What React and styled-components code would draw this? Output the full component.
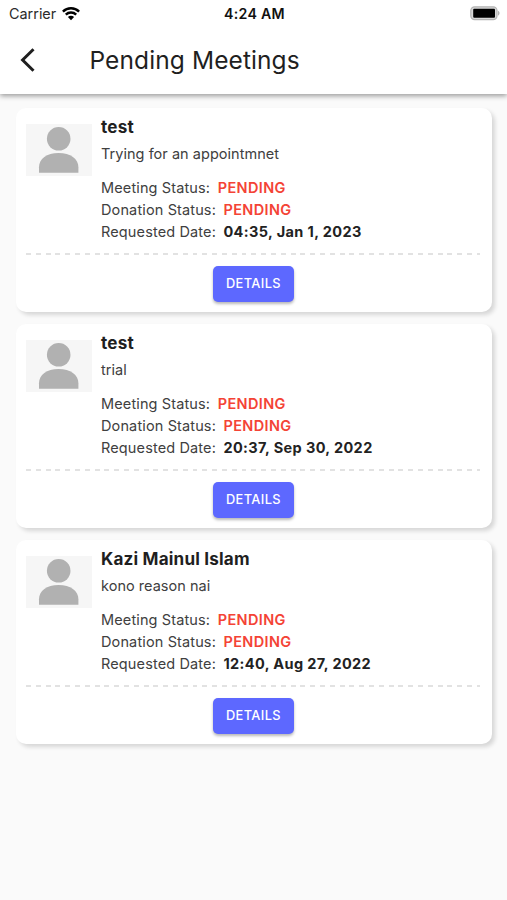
import React from 'react';
import styled, { createGlobalStyle } from 'styled-components';

const GlobalStyle = createGlobalStyle`
   * {
      box-sizing: border-box;
   }
   body {
      margin: 0;
      background: #fafafa;
      font-family: Inter, 'Liberation Sans', sans-serif;
      color: #1f1f1f;
   }
`

const Screen = styled.div`
   width: 507px;
   height: 900px;
   overflow: hidden;
   background: #fafafa;
`

const Header = styled.header`
   height: 94px;
   background: #fff;
   box-shadow: 0 2px 5px rgba(0, 0, 0, 0.38);
`

const StatusBar = styled.div`
   display: grid;
   grid-template-columns: 1fr auto 1fr;
   align-items: center;
   height: 27px;
   padding: 0 7px 0 9px;
`

const Carrier = styled.div`
   display: flex;
   align-items: center;
   gap: 6px;
   font-size: 14.4px;
   letter-spacing: 0;
   color: #2b2b2b;
`

const Clock = styled.div`
   font-size: 14.2px;
   font-weight: 600;
   letter-spacing: 0.25px;
   color: #111;
`

const BatteryIcon = styled.svg`
   justify-self: end;
`

const NavBar = styled.div`
   display: flex;
   align-items: center;
   height: 65px;
   padding-left: 20px;
`

const BackButton = styled.button`
   display: flex;
   width: 69.5px;
   padding: 0;
   border: none;
   background: none;
`

const Title = styled.h1`
   margin: 0;
   font-size: 24.5px;
   line-height: 30px;
   font-weight: 400;
   letter-spacing: 0.1px;
`

const List = styled.main`
   display: flex;
   flex-direction: column;
   gap: 12.7px;
   padding: 14px 15px 0 16px;
`

const Card = styled.article`
   height: 203.5px;
   padding: 8px 12px 0 9.5px;
   border-radius: 10px;
   background: #fff;
   box-shadow: 3px 3px 4px rgba(0, 0, 0, 0.14);
`

const CardTop = styled.div`
   display: flex;
   height: 136.5px;
`

const Avatar = styled.svg`
   flex: none;
   margin: 8px 9.5px 0 0;
   background: #f6f6f6;
`

const Name = styled.h2`
   margin: 0;
   font-size: 17.1px;
   line-height: 22px;
   font-weight: 700;
   letter-spacing: 0.18px;
`

const Reason = styled.p`
   margin: 5px 0 12px;
   font-size: 14.5px;
   line-height: 22px;
   letter-spacing: 0.03px;
   color: #404040;
`

const Field = styled.div`
   display: flex;
   gap: 7.5px;
   font-size: 14.5px;
   line-height: 22px;
   letter-spacing: 0.13px;
   color: #404040;
`

const Value = styled.span`
   font-weight: ${props => props.$pending ? 600 : 700};
   letter-spacing: 0.38px;
   color: ${props => props.$pending ? '#f44336' : '#222'};
`

const Divider = styled.div`
   height: 2px;
   background: repeating-linear-gradient(to right, #e2e2e2 0 4.9px, transparent 4.9px 9.8px);
`

const DetailsButton = styled.button`
   display: block;
   width: 81px;
   height: 36px;
   margin: 11.5px 0 0 187.5px;
   padding: 0 0 1px;
   border: none;
   border-radius: 5px;
   background: #5d68ff;
   box-shadow: 0 2px 3px rgba(0, 0, 0, 0.28);
   color: #fff;
   font-family: inherit;
   font-size: 12.8px;
   font-weight: 500;
   letter-spacing: 0.4px;
`

const meetings = [
   { id: 1, name: 'test', reason: 'Trying for an appointmnet', date: '04:35, Jan 1, 2023' },
   { id: 2, name: 'test', reason: 'trial', date: '20:37, Sep 30, 2022' },
   { id: 3, name: 'Kazi Mainul Islam', reason: 'kono reason nai', date: '12:40, Aug 27, 2022' },
];

const WifiIcon = () => (
   <svg width="18" height="14" viewBox="0 0 18 14" fill="none" stroke="#000" strokeWidth="2.4">
      <path d="M0.9 4.6a11.5 11.5 0 0 1 16.2 0" />
      <path d="M3.8 7.6a7.4 7.4 0 0 1 10.4 0" />
      <path d="M9 13.2 5.9 10a4.4 4.4 0 0 1 6.2 0Z" fill="#000" stroke="none" />
   </svg>
)

const Battery = () => (
   <BatteryIcon width="30" height="15" viewBox="0 0 30 15">
      <rect x="0.8" y="0.8" width="26.2" height="12.8" rx="3.8" fill="#d8d8d8" stroke="#b4b4b4" strokeWidth="1.2" />
      <rect x="3.2" y="2.8" width="21.8" height="9" rx="1" fill="#000" />
      <path d="M28 4.8c2 .8 2 4 0 4.8Z" fill="#b4b4b4" />
   </BatteryIcon>
)

const MeetingCard = ({ meeting }) => (
   <Card>
      <CardTop>
         <Avatar width="66" height="52" viewBox="0 0 66 52" fill="#b1b1b1">
            <circle cx="32.7" cy="14.8" r="11.8" />
            <path d="M13 48.7V43.2C13 34.5 20.7 28.9 32.6 28.9S52.4 34.5 52.4 43.2V48.7Z" />
         </Avatar>
         <div>
            <Name>{meeting.name}</Name>
            <Reason>{meeting.reason}</Reason>
            <Field>Meeting Status: <Value $pending>PENDING</Value></Field>
            <Field>Donation Status: <Value $pending>PENDING</Value></Field>
            <Field>Requested Date: <Value>{meeting.date}</Value></Field>
         </div>
      </CardTop>
      <Divider />
      <DetailsButton>DETAILS</DetailsButton>
   </Card>
)

const App = () => {
   return (
      <Screen>
         <GlobalStyle />
         <Header>
            <StatusBar>
               <Carrier>Carrier <WifiIcon /></Carrier>
               <Clock>4:24 AM</Clock>
               <Battery />
            </StatusBar>
            <NavBar>
               <BackButton aria-label="Back">
                  <svg width="16" height="24" viewBox="0 0 16 24" fill="none" stroke="#1f1f1f" strokeWidth="3">
                     <path d="M13.5 1.2 2.6 12l10.9 10.8" />
                  </svg>
               </BackButton>
               <Title>Pending Meetings</Title>
            </NavBar>
         </Header>
         <List>
            {meetings.map(meeting => <MeetingCard key={meeting.id} meeting={meeting} />)}
         </List>
      </Screen>
   );
}
export default App;
